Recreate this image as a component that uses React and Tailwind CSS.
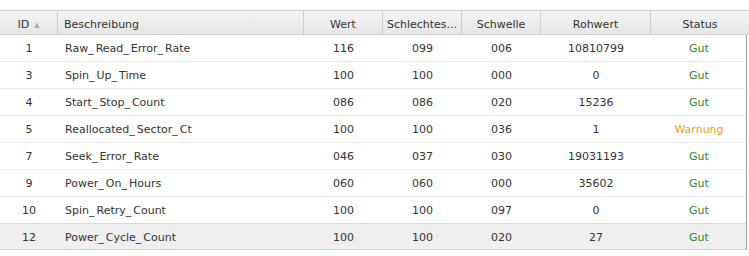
import React from 'react';

const columns = [
  { key: 'id', label: 'ID', width: 58 },
  { key: 'name', label: 'Beschreibung', width: 246, left: true },
  { key: 'value', label: 'Wert', width: 79 },
  { key: 'worst', label: 'Schlechtes...', width: 79 },
  { key: 'thresh', label: 'Schwelle', width: 79 },
  { key: 'raw', label: 'Rohwert', width: 110 },
  { key: 'status', label: 'Status', width: 98 },
];

const rows = [
  ['1', 'Raw_Read_Error_Rate', '116', '099', '006', '10810799', 'Gut'],
  ['3', 'Spin_Up_Time', '100', '100', '000', '0', 'Gut'],
  ['4', 'Start_Stop_Count', '086', '086', '020', '15236', 'Gut'],
  ['5', 'Reallocated_Sector_Ct', '100', '100', '036', '1', 'Warnung'],
  ['7', 'Seek_Error_Rate', '046', '037', '030', '19031193', 'Gut'],
  ['9', 'Power_On_Hours', '060', '060', '000', '35602', 'Gut'],
  ['10', 'Spin_Retry_Count', '100', '100', '097', '0', 'Gut'],
  ['12', 'Power_Cycle_Count', '100', '100', '020', '27', 'Gut'],
];

// Verdana's underscore is wider than DejaVu's, so pad it a little
function Name({ text }) {
  const parts = text.split('_');
  return (
    <span>
      {parts.map((p, i) => (
        <React.Fragment key={i}>
          {i > 0 && <span className="tracking-[2px]">_</span>}
          {p}
        </React.Fragment>
      ))}
    </span>
  );
}

export default function App() {
  return (
    <div className="h-[256px] w-[749px] bg-white pt-[10px] text-[11px] text-[#333]" style={{ fontFamily: '"DejaVu Sans", Verdana, sans-serif' }}>
      {/* Header */}
      <div className="flex h-[25px] border-t border-b border-[#d0d0d0] bg-gradient-to-b from-[#f4f4f4] to-[#e6e6e6]">
        {columns.map((c, i) => (
          <div
            key={c.key}
            style={{ width: c.width }}
            className={`flex shrink-0 items-center pt-[5px] border-r border-[#d0d0d0] ${c.left ? 'justify-start pl-[6px]' : 'justify-center'} ${i === columns.length - 1 ? 'border-r-0' : ''}`}
          >
            <span>{c.label}</span>
            {c.key === 'id' && <span className="ml-[5px] text-[7px] text-[#aaa]">▲</span>}
          </div>
        ))}
      </div>

      {/* Body */}
      <div className="w-[747px] border-r border-[#a0a0a0]">
        {rows.map((r, ri) => {
          const selected = ri === rows.length - 1;
          return (
            <div
              key={r[0]}
              className={`flex h-[27px] border-b ${selected ? 'border-t border-[#d8d8d8] bg-[#efefef] -mt-px' : 'border-[#ececec]'}`}
            >
              {columns.map((c, ci) => {
                let color = '';
                if (c.key === 'status') color = r[ci] === 'Gut' ? 'text-[#2a8a1e]' : 'text-[#f0a020]';
                return (
                  <div
                    key={c.key}
                    style={{ width: ci === columns.length - 1 ? c.width - 2 : c.width }}
                    className={`flex shrink-0 items-center pt-[3px] ${c.left ? 'justify-start pl-[7px]' : 'justify-center'} ${color}`}
                  >
                    {c.key === 'name' ? <Name text={r[ci]} /> : r[ci]}
                  </div>
                );
              })}
            </div>
          );
        })}
      </div>
    </div>
  );
}
